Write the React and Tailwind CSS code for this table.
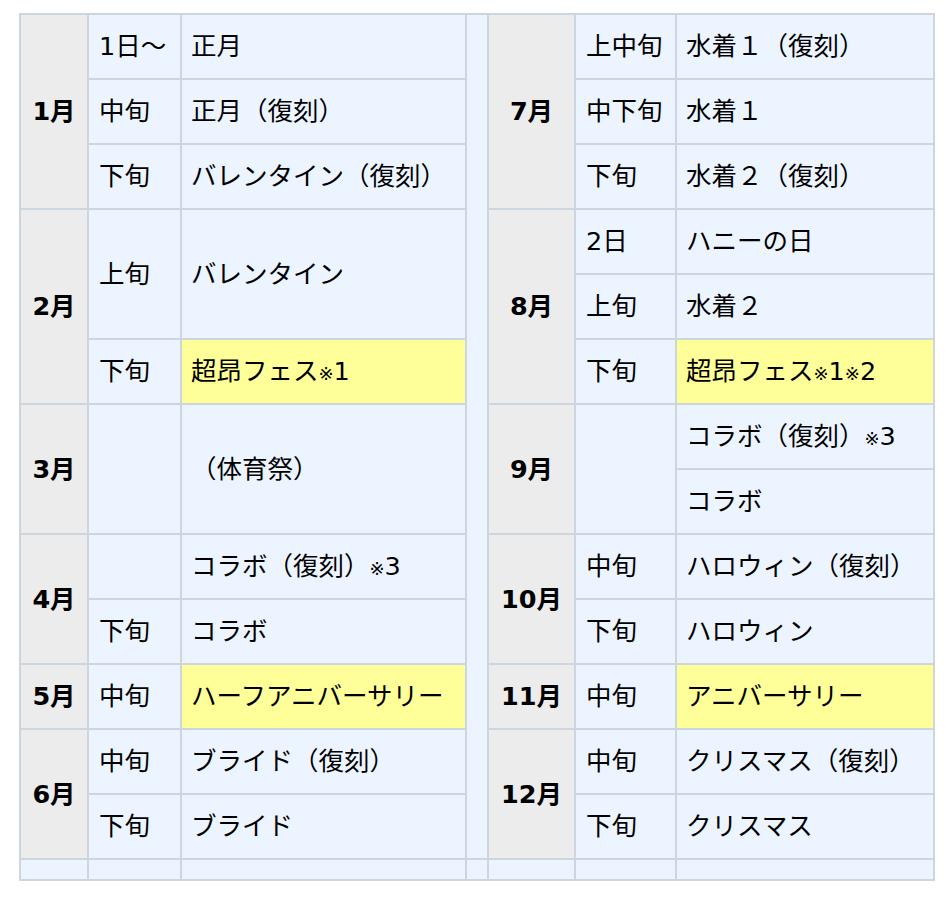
const left = [
  { month: "1月", rows: 3, items: [
    { period: "1日〜", event: "正月" },
    { period: "中旬", event: "正月（復刻）" },
    { period: "下旬", event: "バレンタイン（復刻）" },
  ] },
  { month: "2月", rows: 3, items: [
    { period: "上旬", event: "バレンタイン", span: 2 },
    { period: "下旬", event: "超昂フェス※1", hi: true },
  ] },
  { month: "3月", rows: 2, items: [
    { period: "", event: "（体育祭）", span: 2 },
  ] },
  { month: "4月", rows: 2, items: [
    { period: "", event: "コラボ（復刻）※3" },
    { period: "下旬", event: "コラボ" },
  ] },
  { month: "5月", rows: 1, items: [
    { period: "中旬", event: "ハーフアニバーサリー", hi: true },
  ] },
  { month: "6月", rows: 2, items: [
    { period: "中旬", event: "ブライド（復刻）" },
    { period: "下旬", event: "ブライド" },
  ] },
];

const right = [
  { month: "7月", rows: 3, items: [
    { period: "上中旬", event: "水着１（復刻）" },
    { period: "中下旬", event: "水着１" },
    { period: "下旬", event: "水着２（復刻）" },
  ] },
  { month: "8月", rows: 3, items: [
    { period: "2日", event: "ハニーの日" },
    { period: "上旬", event: "水着２" },
    { period: "下旬", event: "超昂フェス※1※2", hi: true },
  ] },
  { month: "9月", rows: 2, items: [
    { period: "", event: "コラボ（復刻）※3", pspan: 2 },
    { event: "コラボ" },
  ] },
  { month: "10月", rows: 2, items: [
    { period: "中旬", event: "ハロウィン（復刻）" },
    { period: "下旬", event: "ハロウィン" },
  ] },
  { month: "11月", rows: 1, items: [
    { period: "中旬", event: "アニバーサリー", hi: true },
  ] },
  { month: "12月", rows: 2, items: [
    { period: "中旬", event: "クリスマス（復刻）" },
    { period: "下旬", event: "クリスマス" },
  ] },
];

const spanRow = {
  1: "row-span-1",
  2: "row-span-2",
  3: "row-span-3",
};

// small reference mark, as in the original table
function withMarks(text) {
  const parts = text.split("※");
  return parts.map((p, i) =>
    i === 0 ? (
      p
    ) : (
      <span key={i}>
        <span className="text-[18px]">※</span>
        {p}
      </span>
    )
  );
}

// cells for one half, placed with explicit rows and columns
function halfCells(groups, side) {
  const cols =
    side === "left"
      ? ["col-start-1", "col-start-2", "col-start-3"]
      : ["col-start-5", "col-start-6", "col-start-7"];
  const rowStart = [
    "row-start-1", "row-start-2", "row-start-3", "row-start-4", "row-start-5",
    "row-start-6", "row-start-7", "row-start-8", "row-start-9", "row-start-10",
    "row-start-11", "row-start-12", "row-start-13",
  ];
  const out = [];
  let r = 0;
  groups.forEach((g, gi) => {
    out.push(
      <div
        key={side + "m" + gi}
        className={`${cols[0]} ${rowStart[r]} ${spanRow[g.rows]} bg-[#ececec] flex items-center justify-center font-bold`}
      >
        {g.month}
      </div>
    );
    let rr = r;
    g.items.forEach((it, ii) => {
      const span = it.span || 1;
      if (it.period !== undefined) {
        out.push(
          <div
            key={side + "p" + gi + ii}
            className={`${cols[1]} ${rowStart[rr]} ${spanRow[it.pspan || span]} bg-[#ecf4ff] flex items-center pl-[10px]`}
          >
            {it.period}
          </div>
        );
      }
      out.push(
        <div
          key={side + "e" + gi + ii}
          className={`${cols[2]} ${rowStart[rr]} ${spanRow[span]} ${it.hi ? "bg-[#ffff99]" : "bg-[#ecf4ff]"} flex items-center pl-[9px] whitespace-nowrap`}
        >
          {withMarks(it.event)}
        </div>
      );
      rr += span;
    });
    r += g.rows;
  });
  return out;
}

export default function App() {
  return (
    <div className="bg-white w-[951px] h-[902px] pt-[13px] pl-[19px] text-black text-[25.5px] font-['DejaVu_Sans','Noto_Sans_CJK_JP',sans-serif]">
      <div className="grid w-fit bg-[#cdd5df] p-[2px] gap-[2px] grid-cols-[66px_91px_283px_20px_85px_99px_256px] grid-rows-[repeat(13,63px)_19px]">
        {halfCells(left, "left")}
        <div className="col-start-4 row-start-1 row-span-13 bg-[#ecf4ff]" />
        {halfCells(right, "right")}
        <div className="col-start-1 row-start-14 bg-[#ecf4ff]" />
        <div className="col-start-2 row-start-14 bg-[#ecf4ff]" />
        <div className="col-start-3 row-start-14 bg-[#ecf4ff]" />
        <div className="col-start-4 row-start-14 bg-[#ecf4ff]" />
        <div className="col-start-5 row-start-14 bg-[#ecf4ff]" />
        <div className="col-start-6 row-start-14 bg-[#ecf4ff]" />
        <div className="col-start-7 row-start-14 bg-[#ecf4ff]" />
      </div>
    </div>
  );
}
